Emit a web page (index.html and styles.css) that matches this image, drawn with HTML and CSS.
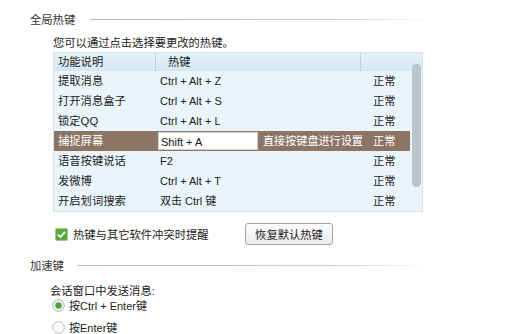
FILE: index.html
```html
<!DOCTYPE html>
<html lang="zh-CN">
<head>
  <meta charset="UTF-8" />
  <title>热键设置</title>
  <link rel="stylesheet" href="styles.css">
</head>
<body>
  <div class="group-title">
    <span>全局热键</span>
    <div class="rule"></div>
  </div>
  <p class="hint">您可以通过点击选择要更改的热键。</p>

  <div class="table">
    <div class="row head">
      <div class="c1">功能说明</div>
      <div class="c2">热键</div>
      <div class="c3"></div>
    </div>
    <div class="row"><div class="c1">提取消息</div><div class="c2">Ctrl + Alt + Z</div><div class="c3">正常</div></div>
    <div class="row"><div class="c1">打开消息盒子</div><div class="c2">Ctrl + Alt + S</div><div class="c3">正常</div></div>
    <div class="row"><div class="c1">锁定QQ</div><div class="c2">Ctrl + Alt + L</div><div class="c3">正常</div></div>
    <div class="row selected">
      <div class="c1">捕捉屏幕</div>
      <div class="c2"><span class="key-input">Shift + A</span><span class="key-tip">直接按键盘进行设置</span></div>
      <div class="c3">正常</div>
    </div>
    <div class="row"><div class="c1">语音按键说话</div><div class="c2">F2</div><div class="c3">正常</div></div>
    <div class="row"><div class="c1">发微博</div><div class="c2">Ctrl + Alt + T</div><div class="c3">正常</div></div>
    <div class="row"><div class="c1">开启划词搜索</div><div class="c2">双击 Ctrl 键</div><div class="c3">正常</div></div>
    <div class="thumb"></div>
  </div>

  <div class="check-row">
    <label class="check">
      <svg width="13" height="13" viewBox="0 0 13 13">
        <rect x="0.5" y="0.5" width="12" height="12" rx="1" fill="#5aa93a" stroke="#a7c99a"/>
        <path d="M3 6.6 L5.4 9 L10 3.8" fill="none" stroke="#fff" stroke-width="1.8"/>
      </svg>
      热键与其它软件冲突时提醒
    </label>
    <button class="btn">恢复默认热键</button>
  </div>

  <div class="group-title second">
    <span>加速键</span>
    <div class="rule"></div>
  </div>
  <p class="send-label">会话窗口中发送消息:</p>
  <label class="radio">
    <svg width="13" height="13" viewBox="0 0 13 13">
      <circle cx="6.5" cy="6.5" r="5.8" fill="#f4f4f4" stroke="#a9b0b5"/>
      <circle cx="6.5" cy="6.5" r="3.2" fill="#4ea533"/>
    </svg>
    按Ctrl + Enter键
  </label>
  <label class="radio last">
    <svg width="13" height="13" viewBox="0 0 13 13">
      <circle cx="6.5" cy="6.5" r="5.8" fill="#fafafa" stroke="#b7bdc1"/>
    </svg>
    按Enter键
  </label>
</body>
</html>
```

FILE: styles.css
```css
body {
  margin: 0;
  padding: 11px 0 0 30px;
  background: #fff;
  color: #222;
  font-family: "Liberation Sans", "Noto Sans CJK SC", sans-serif;
  font-size: 11px;
}
.group-title {
  display: flex;
  align-items: center;
  width: 405px;
  height: 16px;
  color: #333;
  font-size: 11.3px;
}
.group-title .rule {
  flex: 1;
  height: 1px;
  margin-left: 15px;
  background: linear-gradient(to right, #b4bcc2, #c8ced2 70%, rgba(220, 224, 228, 0));
}
.group-title.second {
  margin-top: 12px;
}
.group-title.second .rule {
  margin-left: 14px;
}
.hint {
  margin: 8px 0 0 23px;
  line-height: 16px;
  font-size: 11.3px;
}
.table {
  position: relative;
  width: 368px;
  margin: 1px 0 0 23px;
  background: #eaf5fb;
  border: 1px solid #d3e5ee;
}
.row {
  display: flex;
  height: 20px;
  line-height: 20px;
  margin-right: 12px;
  white-space: nowrap;
}
.row.head {
  height: 18px;
  line-height: 18px;
  margin-right: 0;
  background: linear-gradient(to bottom, #e4f1f8, #d3e7f2);
}
.c1 {
  width: 101px;
  flex-shrink: 0;
  padding-left: 4px;
  box-sizing: border-box;
  font-size: 11.3px;
}
.c2 {
  width: 205px;
  flex-shrink: 0;
  padding-left: 5px;
  box-sizing: border-box;
  display: flex;
  align-items: center;
}
.c3 {
  flex: 1;
  padding-left: 13px;
  font-size: 11.3px;
}
.head .c2,
.head .c3 {
  border-left: 1px solid #bdd0da;
  padding-left: 12px;
  font-size: 11.3px;
}
.head .c3 {
  padding-left: 0;
}
.row.selected {
  background: #8c7565;
  color: #fff;
}
.key-input {
  flex-shrink: 0;
  width: 100px;
  height: 18px;
  line-height: 18px;
  margin-left: -2px;
  padding-left: 2px;
  background: #fff;
  color: #111;
  border: 1px solid #d8d0ca;
  box-sizing: border-box;
}
.key-tip {
  flex-shrink: 0;
  margin-left: 5px;
  font-size: 11.1px;
}
.thumb {
  position: absolute;
  right: 1px;
  top: 11px;
  width: 9px;
  height: 123px;
  border-radius: 5px;
  background: #b8c5cb;
}
.check-row {
  display: flex;
  align-items: center;
  margin: 11px 0 0 25px;
  height: 22px;
}
.check {
  display: flex;
  align-items: center;
  gap: 5px;
  width: 190px;
  font-size: 11.3px;
}
.btn {
  width: 88px;
  height: 22px;
  padding: 0;
  font-family: "Noto Sans CJK SC", sans-serif;
  font-size: 11.3px;
  color: #222;
  background: linear-gradient(to bottom, #fdfdfd, #ebebeb);
  border: 1px solid #a3a3a3;
  border-radius: 3px;
}
.send-label {
  margin: 11px 0 0 20px;
  line-height: 14px;
  font-size: 11.3px;
}
.radio {
  display: flex;
  align-items: center;
  gap: 4px;
  height: 14px;
  margin: 0 0 0 22px;
}
.radio.last {
  margin-top: 8px;
}
```
